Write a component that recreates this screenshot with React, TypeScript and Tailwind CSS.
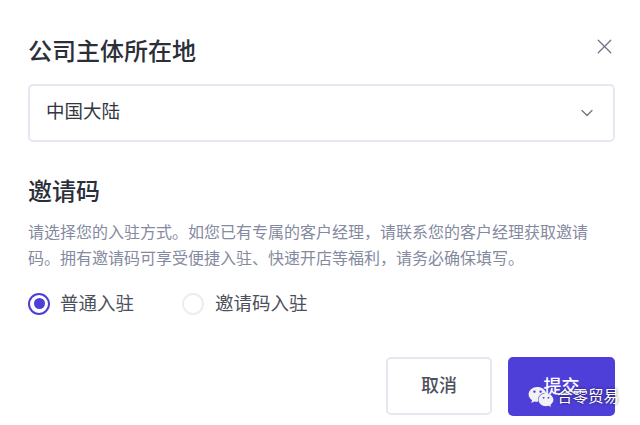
import { ChevronDown, X } from 'lucide-react';
import { FaWeixin } from 'react-icons/fa';

const App = () => {
  return (
    <div className="relative w-[640px] h-[425px] overflow-hidden bg-white pl-[28px] pr-[25px] pt-[36px] font-['Inter','Noto_Sans_CJK_SC',sans-serif] text-[#2b2f3a]">
      <div className="flex h-[32px] items-center justify-between">
        <h1 className="text-[24px] leading-[32px] font-medium">公司主体所在地</h1>
        <X className="mr-[-2px] mb-[12px] text-[#6f7282]" size={25} strokeWidth={1.2} />
      </div>
      <div className="mt-[16px] flex h-[58px] items-center justify-between rounded-[5px] border-2 border-[#e6e7f0] pl-[16px] pr-[16px]">
        <span className="mb-[3px] text-[18.5px] text-[#33363f]">中国大陆</span>
        <ChevronDown className="text-[#6f7282]" size={20} strokeWidth={1.5} />
      </div>
      <h2 className="mt-[34px] text-[24px] leading-[32px] font-medium">邀请码</h2>
      <p className="mt-[12px] w-[570px] text-[16px] leading-[25.5px] text-[#858aa0]">
        请选择您的入驻方式。如您已有专属的客户经理，请联系您的客户经理获取邀请码。拥有邀请码可享受便捷入驻、快速开店等福利，请务必确保填写。
      </p>
      <div className="mt-[19px] flex items-center text-[18.5px] text-[#4d505c]">
        <div className="flex h-[22px] w-[22px] items-center justify-center rounded-full border-2 border-[#4f3fd9]">
          <div className="h-[11px] w-[11px] rounded-full bg-[#4f3fd9]" />
        </div>
        <span className="ml-[10px]">普通入驻</span>
        <div className="ml-[48px] h-[22px] w-[22px] rounded-full border-2 border-[#ececf2]" />
        <span className="ml-[11px]">邀请码入驻</span>
      </div>
      <div className="mt-[39px] flex justify-end gap-[16px]">
        <button className="h-[58px] w-[106px] rounded-[5px] border-2 border-[#e6e7f0] text-[18px] font-medium text-[#4d505c]">取消</button>
        <button className="h-[59px] w-[107px] rounded-[5px] bg-[#4f3fd9] text-[18px] font-medium text-white">提交</button>
      </div>
      <div className="absolute left-[528px] top-[384px] flex items-center gap-[3px] text-white [text-shadow:0_0_3px_rgba(0,0,0,0.7)]">
        <FaWeixin size={26} className="text-[#f2f2f5]" />
        <span className="text-[15.5px] leading-[20px]">合零贸易</span>
      </div>
    </div>
  );
};

export default App;
